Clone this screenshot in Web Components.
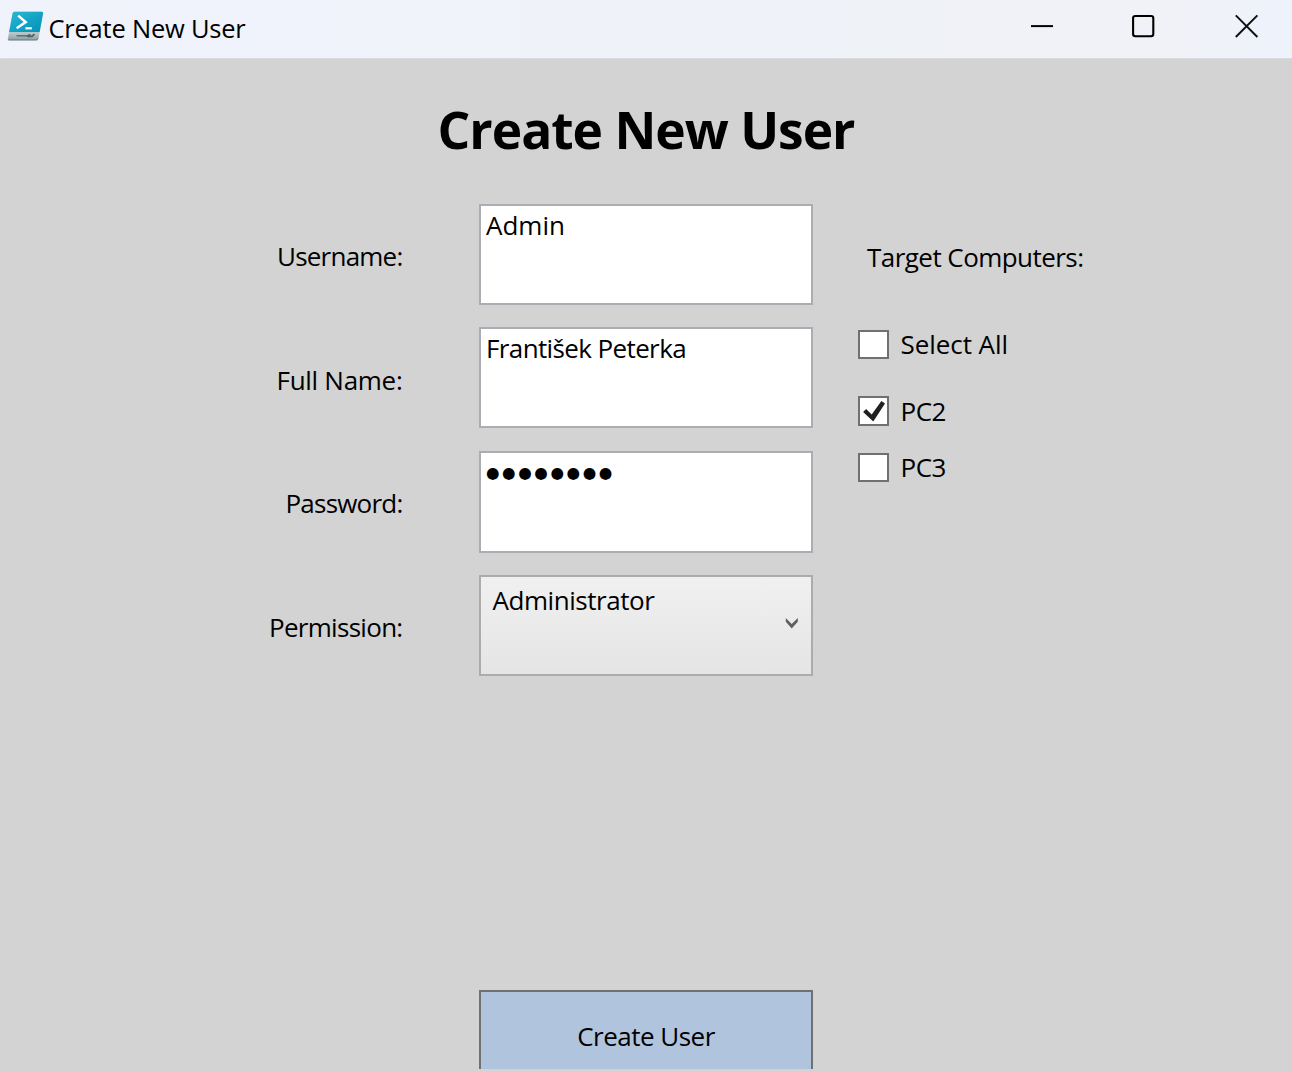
<!DOCTYPE html>
<html lang="en">
<head>
<meta charset="utf-8">
<title>Create New User</title>
<style>
html,body{margin:0;height:100%;overflow:hidden}
body{font:26px "Open Sans","Noto Sans",sans-serif;color:#000;background:#d3d3d3}
</style>
</head>
<body>
<app-window></app-window>
<script>
const define = (name, html, setup) => customElements.define(name, class extends HTMLElement {
  constructor() {
    super();
    this.attachShadow({mode: 'open'}).innerHTML = html;
  }
  connectedCallback() { if (setup) setup.call(this, this.shadowRoot); }
});

// A single line of text, tracked so that its advance equals the "w" attribute.
define('text-run', `<style>:host{display:block;flex:none;white-space:nowrap;line-height:36px}span{display:inline-block}</style><span></span>`,
  function (root) {
    const s = root.querySelector('span');
    s.textContent = this.getAttribute('text');
    const w = +this.getAttribute('w');
    this.style.width = w + 'px';
    s.style.letterSpacing = (w - s.getBoundingClientRect().width) / s.textContent.length + 'px';
  });

define('ps-icon', `<style>:host{display:block;width:38px;height:32px}svg{display:block}</style>
<svg width="38" height="32" viewBox="7 10 38 32">
<defs><linearGradient id="b" x1="0" y1="0" x2="1" y2="1"><stop offset="0" stop-color="#2fb9d2"/><stop offset=".5" stop-color="#12a5c6"/><stop offset="1" stop-color="#078fb9"/></linearGradient>
<linearGradient id="g" x1="0" y1="0" x2="0" y2="1"><stop offset="0" stop-color="#b5c5c8"/><stop offset=".75" stop-color="#b5c5c8"/><stop offset="1" stop-color="#8b9da2"/></linearGradient></defs>
<path d="M14.4 11.7H41.8Q43.4 11.7 43.1 13.3L38.5 38.7Q38.1 40.6 36.2 40.6H9Q7.5 40.6 7.8 39L12.6 13.3Q12.9 11.7 14.4 11.7Z" fill="url(#g)"/>
<path d="M14.4 11.7H41.8Q43.4 11.7 43.1 13.3L39.6 32H9.1L12.6 13.3Q12.9 11.7 14.4 11.7Z" fill="url(#b)"/>
<path d="M8.6 39.8H36Q37.4 39.8 37.8 38.4" stroke="#71858b" stroke-width="1" fill="none"/>
<path d="M18.2 15.6L25.7 22.1L16.6 28.2" stroke="#fff" stroke-width="2.5" fill="none"/>
<path d="M25.4 28.3H31.8" stroke="#fff" stroke-width="2.2"/>
<path d="M16.5 35.8H28" stroke="#5d6f76" stroke-width="1.5"/>
<path d="M27 36.4H32L34.5 34.2" stroke="#4d5f66" stroke-width="1.7" fill="none"/><circle cx="29.3" cy="35.6" r="1.7" fill="#52656b"/>
</svg>`);

define('title-bar', `<style>
:host{display:flex;height:59px;margin-bottom:-1px;box-sizing:border-box;padding-left:7px;background:linear-gradient(90deg,#f0f3fb,#eff2f9 50%,#f0f2f7 75%,#f0f2f8 92%,#eef2fb);border-bottom:1px solid #d9dadd}
ps-icon{margin:10px 3.5px 0 0}text-run{font-size:25.5px;margin-top:10px}
.controls{margin-left:auto;display:flex}.controls svg{display:block;width:102px;height:57px;flex:none}
</style>
<ps-icon></ps-icon><text-run text="Create New User" w="197"></text-run>
<div class="controls">
<svg viewBox="991 0 102 57"><path d="M1031 26.1H1053" stroke="#000" stroke-width="2"/></svg>
<svg viewBox="1093 0 102 57"><rect x="1133.1" y="16" width="20.2" height="20.2" rx="2.2" fill="none" stroke="#000" stroke-width="2.1"/></svg>
<svg viewBox="1195 0 102 57" style="width:97px" preserveAspectRatio="xMinYMin slice"><path d="M1235.8 15.4L1257.4 37M1257.4 15.4L1235.8 37" stroke="#111" stroke-width="2"/></svg>
</div>`);

define('form-label', `<style>:host{display:flex;align-items:center;justify-content:flex-end;padding:3px 1.5px 0 0;box-sizing:border-box;height:101px}</style><slot></slot>`);

define('text-box', `<style>:host{display:block;box-sizing:border-box;width:334px;height:101px;border:2px solid #abadb3;background:#fff;padding:1px 0 0 5px}</style><slot></slot>`);

define('combo-box', `<style>:host{display:flex;justify-content:space-between;box-sizing:border-box;width:334px;height:101px;border:2px solid #acacac;background:linear-gradient(#f0f0f0,#e5e5e5);padding:5px 12px 0 11.5px}svg{display:block;margin-top:34px}</style><slot></slot>
<svg width="14" height="14" viewBox="785 616 14 14"><path d="M785.8 618V621.8L791.7 628.5L797.8 621.8V618L791.7 624Z" fill="#606060"/></svg>`);

define('check-box', `<style>:host{display:flex;align-items:center;height:30px}
.box{flex:none;box-sizing:border-box;width:31px;height:29px;border:2px solid #707070;background:#fff;margin-right:11.5px}
svg{display:none;width:27px;height:26px}:host([checked]) .box{height:30px}:host([checked]) svg{display:block}
</style><div class="box"><svg viewBox="860 398 27 26"><path d="M863.1 411.9L866.1 409L871.7 414.5L881.4 400.9L885 403.5L873.3 421.5Z" fill="#212121"/></svg></div><slot></slot>`);

define('push-button', `<style>:host{display:flex;justify-content:center;box-sizing:border-box;width:334px;height:79px;border:2px solid #707070;border-bottom:0;background:#b0c4de;padding-top:26px}</style><slot></slot>`);

define('app-window', `<style>
:host{display:flex;flex-direction:column;height:1072px;width:1292px;background:#d3d3d3;overflow:hidden}
main{flex:1;display:flex;flex-direction:column;align-items:center;box-sizing:border-box;padding-top:36px}
h1{margin:0;font-size:51.5px;font-weight:700}h1 text-run{line-height:70px}
.form{display:grid;grid-template-columns:404px 334px 1fr;column-gap:75px;width:100%;margin-top:40px}
.labels,.fields{display:flex;flex-direction:column;gap:22.5px}
.fields{gap:0}.fields>:nth-child(2){margin-top:22px}.fields>:nth-child(3){margin-top:23px;height:102px}.fields>:nth-child(4){margin-top:22px}
.targets{margin-left:-30px}.targets>text-run{margin:35px 0 0 9px}
.checks{display:flex;flex-direction:column;margin-top:54px}
.checks check-box:nth-child(2){margin-top:37px}.checks check-box:nth-child(3){margin-top:26px}
.dots{font-family:"DejaVu Sans";font-size:15.5px}.dots{padding-top:1px}
push-button{margin-top:auto;margin-bottom:3px}
</style>
<title-bar></title-bar>
<main>
<h1><text-run text="Create New User" w="417"></text-run></h1>
<div class="form">
<div class="labels">
<form-label><text-run text="Username:" w="125.5"></text-run></form-label>
<form-label><text-run text="Full Name:" w="126"></text-run></form-label>
<form-label><text-run text="Password:" w="117"></text-run></form-label>
<form-label><text-run text="Permission:" w="133.5"></text-run></form-label>
</div>
<div class="fields">
<text-box><text-run text="Admin" w="79"></text-run></text-box>
<text-box><text-run text="František Peterka" w="200"></text-run></text-box>
<text-box><text-run class="dots" text="●●●●●●●●" w="129"></text-run></text-box>
<combo-box><text-run text="Administrator" w="162"></text-run></combo-box>
</div>
<div class="targets">
<text-run text="Target Computers:" w="216.5"></text-run>
<div class="checks">
<check-box><text-run text="Select All" w="107.5"></text-run></check-box>
<check-box checked><text-run text="PC2" w="45.5"></text-run></check-box>
<check-box><text-run text="PC3" w="45.5"></text-run></check-box>
</div></div>
</div>
<push-button><text-run text="Create User" w="137.5"></text-run></push-button>
</main>`);
</script>
</body>
</html>
